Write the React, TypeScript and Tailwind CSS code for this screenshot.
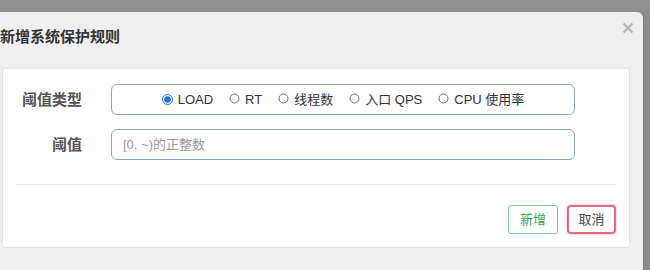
import React from "react";

const options = ["LOAD", "RT", "线程数", "入口 QPS", "CPU 使用率"];

function Radio({ checked }: { checked: boolean }) {
  if (checked) {
    return (
      <svg width="11" height="11" viewBox="0 0 11 11" className="mr-[5px] shrink-0">
        <circle cx="5.5" cy="5.5" r="5" fill="#fff" stroke="#1a73e8" strokeWidth="1" />
        <circle cx="5.5" cy="5.5" r="3.3" fill="#1a73e8" />
      </svg>
    );
  }
  return (
    <svg width="11" height="11" viewBox="0 0 11 11" className="mr-[5px] shrink-0 -translate-y-[1px]">
      <circle cx="5.5" cy="5.5" r="4.5" fill="#fff" stroke="#6b6b6b" strokeWidth="1" />
    </svg>
  );
}

export default function App() {
  return (
    <div className="w-[650px] h-[270px] bg-[#8f8f8f] flex flex-col overflow-hidden font-['Liberation_Sans','Noto_Sans_CJK_SC',sans-serif]">
      <div className="h-[12px] shrink-0" />
      <div className="flex flex-1">
        <div className="w-[643px] bg-[#efefef] rounded-tr-[6px] flex flex-col">
          <div className="h-[56px] flex justify-between">
            <div className="pt-[14px] text-[15px] leading-[20px] font-bold text-[#333] font-['Noto_Sans_CJK_SC',sans-serif]">
              新增系统保护规则
            </div>
            <div className="pt-[10px] pr-[9px]">
              <svg width="12" height="12" viewBox="0 0 12 12">
                <path d="M1.5 1.5L10.5 10.5M10.5 1.5L1.5 10.5" stroke="#b3b3b3" strokeWidth="2" />
              </svg>
            </div>
          </div>
          <div className="ml-[2px] w-[628px] h-[180px] bg-white border border-[#e2e2e2] rounded-[4px] flex flex-col pt-[15px]">
            <div className="flex items-center h-[31px]">
              <div className="w-[79px] text-right text-[15px] font-bold text-[#555] font-['Noto_Sans_CJK_SC',sans-serif]">
                阈值类型
              </div>
              <div className="ml-[29px] w-[464px] h-[31px] border border-[#86a6c6] rounded-[6px] flex items-center justify-center text-[13px] text-[#333]">
                {options.map((o, i) => (
                  <label key={o} className={"flex items-center " + (i < options.length - 1 ? "mr-[16px]" : "")}>
                    <Radio checked={i === 0} />
                    <span>{o}</span>
                  </label>
                ))}
              </div>
            </div>
            <div className="flex items-center h-[31px] mt-[14px]">
              <div className="w-[79px] text-right text-[15px] font-bold text-[#555] font-['Noto_Sans_CJK_SC',sans-serif]">
                阈值
              </div>
              <div className="ml-[29px] w-[464px] h-[31px] border border-[#86a6c6] rounded-[6px] flex items-center pl-[11px] text-[13px] text-[#999]">
                [0, ~)的正整数
              </div>
            </div>
            <div className="ml-[13px] w-[600px] h-[1px] bg-[#e6e6e6] mt-[24px]" />
            <div className="flex justify-end mt-[20px] pr-[13px] gap-[9px]">
              <button className="w-[50px] h-[29px] bg-white border border-[#7fcf95] rounded-[3px] text-[13px] text-[#3aa556]">
                新增
              </button>
              <button className="w-[49px] h-[29px] bg-white border-2 border-[#e26b80] rounded-[4px] shadow-[0_0_3px_rgba(226,107,128,0.6)] text-[13px] text-[#444]">
                取消
              </button>
            </div>
          </div>
        </div>
        <div className="w-[7px] border-l border-[#7a7a7a] bg-[#8c8c8c]" />
      </div>
    </div>
  );
}
